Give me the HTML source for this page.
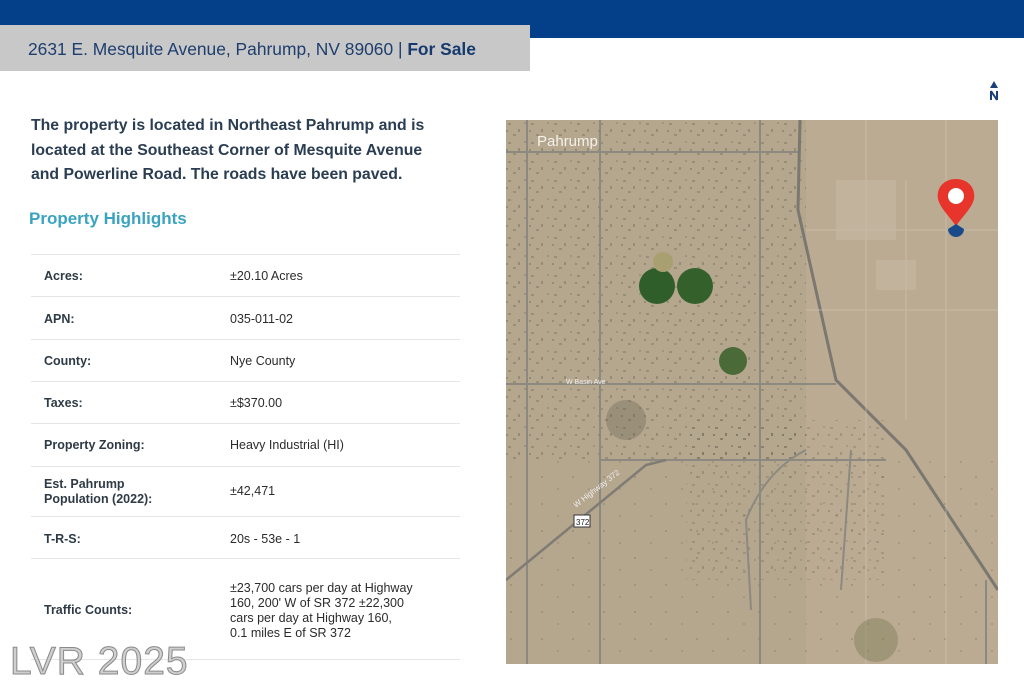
<!DOCTYPE html>
<html><head><meta charset="utf-8"><style>
*{margin:0;padding:0;box-sizing:border-box}
body{width:1024px;height:692px;background:#fff;position:relative;overflow:hidden;font-family:"Liberation Sans","DejaVu Sans",sans-serif}
.topbar{position:absolute;left:0;top:0;width:1024px;height:38px;background:#034089}
.addr{position:absolute;left:0;top:25px;width:530px;height:46px;background:#c8c8c8;color:#1e3e6e;font-size:17.4px;line-height:48px;padding-left:28px;white-space:nowrap}
.addr b{font-weight:bold;color:#163a6e}
.intro{position:absolute;left:31px;top:114px;width:460px;font-size:15.8px;line-height:24.5px;font-weight:bold;color:#2a3d52;white-space:nowrap}
.hl{position:absolute;left:29px;top:209px;font-size:17px;font-weight:bold;color:#3aa3c0}
.row{position:absolute;left:31px;width:429px;border-top:1px solid #e6e6e6;font-size:12.5px;color:#2b2b2b}
.row .k{position:absolute;left:13px;font-weight:bold;color:#2e3a45}
.row .v{position:absolute;left:199px;width:230px;line-height:15px;white-space:nowrap}
.wm{position:absolute;left:10px;top:640px;font-size:39px;color:#cfcfcf;-webkit-text-stroke:1px #8a8a8a;letter-spacing:1px}
</style></head><body>
<div class="topbar"></div>
<div class="addr">2631 E. Mesquite Avenue, Pahrump, NV 89060 | <b>For Sale</b></div>
<div class="intro">The property is located in Northeast Pahrump and is<br>located at the Southeast Corner of Mesquite Avenue<br>and Powerline Road. The roads have been paved.</div>
<div class="hl">Property Highlights</div>

<div class="row" style="top:254px;height:42px"><span class="k" style="top:14px">Acres:</span><span class="v" style="top:14px">±20.10 Acres</span></div>
<div class="row" style="top:296px;height:43px"><span class="k" style="top:15px">APN:</span><span class="v" style="top:15px">035-011-02</span></div>
<div class="row" style="top:339px;height:42px"><span class="k" style="top:14px">County:</span><span class="v" style="top:14px">Nye County</span></div>
<div class="row" style="top:381px;height:42px"><span class="k" style="top:14px">Taxes:</span><span class="v" style="top:14px">±$370.00</span></div>
<div class="row" style="top:423px;height:43px"><span class="k" style="top:14px">Property Zoning:</span><span class="v" style="top:14px">Heavy Industrial (HI)</span></div>
<div class="row" style="top:466px;height:50px"><span class="k" style="top:10px;line-height:15px">Est. Pahrump<br>Population (2022):</span><span class="v" style="top:17px">±42,471</span></div>
<div class="row" style="top:516px;height:42px"><span class="k" style="top:15px">T-R-S:</span><span class="v" style="top:15px">20s - 53e - 1</span></div>
<div class="row" style="top:558px;height:102px;border-bottom:1px solid #e6e6e6"><span class="k" style="top:44px">Traffic Counts:</span><span class="v" style="top:22px">±23,700 cars per day at Highway<br>160, 200' W of SR 372 ±22,300<br>cars per day at Highway 160,<br>0.1 miles E of SR 372</span></div>

<svg style="position:absolute;left:986px;top:80px" width="16" height="22" viewBox="0 0 16 22"><path d="M8 1 L12 8 L4 8Z" fill="#1a3f7a"/><path d="M5 11 L5 20 M5 11 L11 20 M11 11 L11 20" stroke="#1a3f7a" stroke-width="2" fill="none"/></svg>

<svg style="position:absolute;left:506px;top:120px" width="492" height="544" viewBox="0 0 492 544">
<defs>
<pattern id="sp" width="23" height="19" patternUnits="userSpaceOnUse">
<rect x="2" y="3" width="3" height="2" fill="#5a5a48" opacity=".3"/><rect x="12" y="9" width="2" height="3" fill="#4a5040" opacity=".3"/><rect x="18" y="2" width="2" height="2" fill="#666" opacity=".3"/><rect x="7" y="14" width="3" height="2" fill="#55584a" opacity=".3"/><rect x="0" y="10" width="2" height="2" fill="#4d4d40" opacity=".3"/>
</pattern>
<pattern id="sp2" width="31" height="27" patternUnits="userSpaceOnUse">
<rect x="4" y="5" width="2" height="2" fill="#6a6a5a" opacity=".3"/><rect x="20" y="17" width="2" height="2" fill="#6a6a5a" opacity=".25"/>
</pattern>
</defs>
<rect width="492" height="544" fill="#b5a68e"/>
<rect x="300" y="0" width="192" height="544" fill="#bcab93"/>
<rect x="0" y="0" width="300" height="340" fill="url(#sp)"/>
<rect x="0" y="340" width="492" height="204" fill="url(#sp2)"/>
<rect x="180" y="300" width="200" height="160" fill="url(#sp)" opacity=".8"/>
<g stroke="#8c8a80" stroke-width="2" fill="none">
<path d="M21 0V544"/><path d="M94 0V544"/><path d="M254 0V544"/>
<path d="M0 32H294"/><path d="M0 264H330"/><path d="M94 340H380"/>
<path d="M294 0 L292 90 L330 260 L400 330 L492 470" stroke="#7a7870" stroke-width="3"/>
<path d="M0 460 L140 345 L160 340" stroke="#7e7c74" stroke-width="2.5"/>
<path d="M245 490 L240 400 Q260 350 300 330"/><path d="M335 470 L345 330"/><path d="M480 544V460"/>
</g>
<g stroke="#cfc6b4" stroke-width="1" fill="none" opacity=".6">
<path d="M360 0V544M400 60V300M440 0V544M300 110H492M300 190H492"/>
</g>
<rect x="330" y="60" width="60" height="60" fill="#c8bca8" opacity=".5"/>
<rect x="370" y="140" width="40" height="30" fill="#c8bca8" opacity=".5"/>
<circle cx="151" cy="166" r="18" fill="#2f5e2a"/><circle cx="189" cy="166" r="18" fill="#34602c"/>
<circle cx="157" cy="142" r="10" fill="#a8a070"/>
<circle cx="227" cy="241" r="14" fill="#4a6a38"/>
<circle cx="120" cy="300" r="20" fill="#4a4a3a" opacity=".25"/>
<circle cx="370" cy="520" r="22" fill="#6a7048" opacity=".35"/>
<text x="31" y="26" font-size="15" fill="#f4f1ea" font-family="Liberation Sans,sans-serif">Pahrump</text>
<rect x="68" y="395" width="16" height="12" fill="#fff" stroke="#333"/><text x="70" y="405" font-size="8" fill="#222">372</text>
<text x="70" y="388" font-size="8" fill="#eee" transform="rotate(-38 70 388)">W Highway 372</text>
<text x="60" y="264" font-size="7" fill="#eee">W Basin Ave</text>
<path d="M450 59 C438 59 430 68 432 79 C434 88 444 97 450 106 C456 97 466 88 468 79 C470 68 462 59 450 59Z" fill="#e8352b"/>
<circle cx="450" cy="76" r="8" fill="#fff"/>
<path d="M442 109 A8 8 0 1 0 458 109 L450 104Z" fill="#1a4a8a"/>
</svg>
<div class="wm">LVR 2025</div>
</body></html>
